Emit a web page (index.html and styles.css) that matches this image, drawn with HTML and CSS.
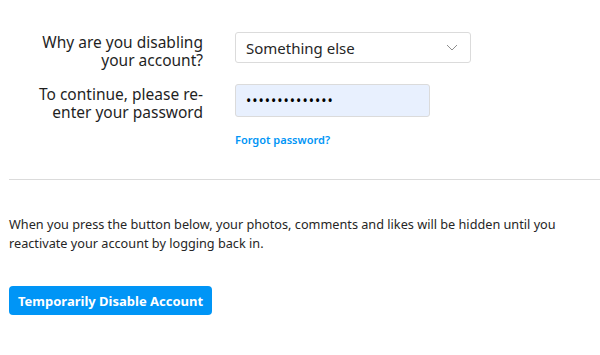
FILE: index.html
```html
<!DOCTYPE html>
<html lang="en">
<head>
  <meta charset="UTF-8">
  <meta name="viewport" content="width=device-width, initial-scale=1.0">
  <title>Temporarily Disable Account</title>
  <link rel="stylesheet" href="styles.css">
</head>
<body>
  <div class="page">
    <!-- Reason + password -->
    <div class="form">
      <div class="form-row">
        <label class="form-label" for="reason">Why are you disabling your account?</label>
        <div class="form-control">
          <div class="select" id="reason">
            <span>Something else</span>
            <svg class="chevron" width="12" height="7" viewBox="0 0 12 7"><path d="M1 1l5 5 5-5" fill="none" stroke="#8e8e8e" stroke-width="1"/></svg>
          </div>
        </div>
      </div>

      <div class="form-row">
        <label class="form-label" for="password">To continue, please re-enter your password</label>
        <div class="form-control">
          <input class="password" id="password" type="password" value="abcdefghijklmn">
          <a class="forgot" href="#">Forgot password?</a>
        </div>
      </div>
    </div>

    <hr class="divider">

    <p class="notice">When you press the button below, your photos, comments and likes will be hidden until you reactivate your account by logging back in.</p>

    <button class="disable-btn">Temporarily Disable Account</button>
  </div>
</body>
</html>
```

FILE: styles.css
```css
body {
  font-family: "Noto Sans", "Open Sans", sans-serif;
  background-color: #fff;
  color: #262626;
  margin: 0;
  padding: 0;
}
.page {
  padding: 32px 0 0 9px;
}
.form-row {
  display: grid;
  grid-template-columns: 194px 235px;
  column-gap: 32px;
  margin-bottom: 15px;
}
.form-row:last-child {
  margin-bottom: 32px;
}
.form-label {
  text-align: right;
  font-size: 15.5px;
  line-height: 18px;
  padding-top: 1px;
  color: #1f1f1f;
}
.form-control {
  display: flex;
  flex-direction: column;
  align-items: flex-start;
}
.select {
  box-sizing: border-box;
  width: 236px;
  height: 31px;
  border: 1px solid #dbdbdb;
  border-radius: 3px;
  display: flex;
  align-items: center;
  justify-content: space-between;
  padding: 0 12px 0 10px;
  font-size: 15px;
}
.password {
  box-sizing: border-box;
  width: 195px;
  height: 33px;
  border: 1px solid #dbdbdb;
  border-radius: 3px;
  background-color: #e8f0fe;
  padding: 0 10px;
  font-size: 14px;
  letter-spacing: 1px;
  font-family: inherit;
  color: #000;
  outline: none;
}
.forgot {
  margin-top: 15px;
  font-size: 11px;
  font-weight: 600;
  color: #0095f6;
  text-decoration: none;
}
.divider {
  border: none;
  border-top: 1px solid #dbdbdb;
  margin: 0;
}
.notice {
  font-size: 12.7px;
  line-height: 19px;
  margin: 35px 0 33px;
  max-width: 585px;
}
.disable-btn {
  background-color: #0095f6;
  border: none;
  border-radius: 4px;
  color: #fff;
  font-family: inherit;
  font-weight: 700;
  font-size: 13px;
  height: 29px;
  padding: 0 9px;
  cursor: pointer;
}
```
